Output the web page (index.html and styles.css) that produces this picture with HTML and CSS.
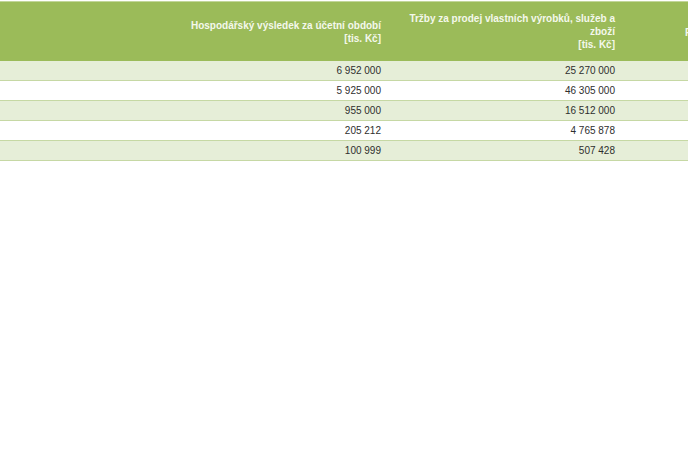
FILE: index.html
```html
<!DOCTYPE html>
<html lang="cs">
<head>
<meta charset="utf-8">
<title>Tabulka</title>
<link rel="stylesheet" href="styles.css">
</head>
<body>
<div class="wrap">
<table class="data">
  <colgroup>
    <col class="c0"><col class="c1"><col class="c2"><col class="c3">
  </colgroup>
  <thead>
    <tr>
      <th></th>
      <th>Hospodářský výsledek za účetní období<br>[tis. Kč]</th>
      <th>Tržby za prodej vlastních výrobků, služeb a<br>zboží<br>[tis. Kč]</th>
      <th class="cut">Počet zaměstnanců</th>
    </tr>
  </thead>
  <tbody>
    <tr class="odd"><td></td><td>6 952 000</td><td>25 270 000</td><td></td></tr>
    <tr><td></td><td>5 925 000</td><td>46 305 000</td><td></td></tr>
    <tr class="odd"><td></td><td>955 000</td><td>16 512 000</td><td></td></tr>
    <tr><td></td><td>205 212</td><td>4 765 878</td><td></td></tr>
    <tr class="odd"><td></td><td>100 999</td><td>507 428</td><td></td></tr>
  </tbody>
</table>
</div>
</body>
</html>
```
FILE: styles.css
```css
html, body {
  margin: 0;
  padding: 0;
  background: #ffffff;
}
body {
  width: 688px;
  height: 459px;
  overflow: hidden;
  font-family: "Liberation Sans", Arial, sans-serif;
}
.wrap {
  padding-top: 1px;
  width: 900px;
}
.data {
  border-collapse: collapse;
  table-layout: fixed;
  width: 860px;
}
.c0 { width: 180px; }
.c1 { width: 210px; }
.c2 { width: 234px; }
.c3 { width: 236px; }
.data th {
  background: #9bbb59;
  border-top: 1px solid #c2d69a;
  color: #f4f8ec;
  font-size: 10px;
  font-weight: bold;
  line-height: 13px;
  text-align: right;
  padding: 0 9px;
  height: 58px;
  vertical-align: middle;
  white-space: nowrap;
}
.data th.cut {
  text-align: left;
  padding-left: 61px;
  padding-top: 1px;
}
.data td {
  font-size: 10px;
  color: #2e2e2e;
  text-align: right;
  padding: 0 9px;
  height: 19px;
  line-height: 19px;
  border-bottom: 1px solid #c6d8a4;
}
.data tbody tr { background: #ffffff; }
.data tbody tr.odd { background: #e6eed8; }
```
